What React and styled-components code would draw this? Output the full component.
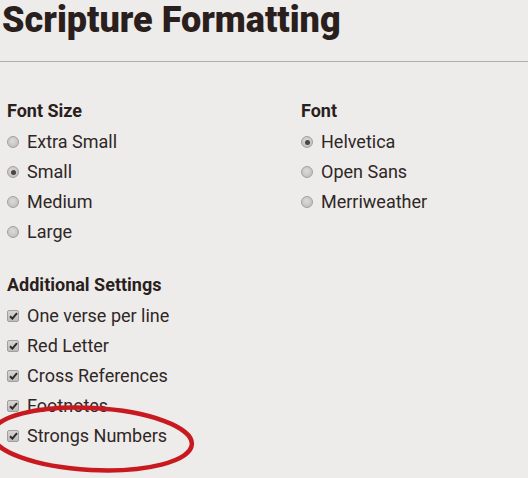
import React from "react";
import styled, { createGlobalStyle } from "styled-components";

const GlobalStyle = createGlobalStyle`
  html, body {
    margin: 0;
    padding: 0;
    background: #edecea;
  }
  body {
    font-family: Roboto, "Liberation Sans", sans-serif;
    color: #2b2322;
  }
`;

const Page = styled.div`
  position: relative;
  width: 528px;
  height: 478px;
  overflow: hidden;
`;

const Title = styled.h1`
  margin: 0;
  padding: 2px 0 0 2px;
  font-size: 36px;
  line-height: 36px;
  font-weight: 900;
  color: #2a1f1d;
`;

const Divider = styled.hr`
  margin: 23px 0 0;
  border: none;
  height: 1px;
  background: #b1afac;
`;

const Settings = styled.div`
  display: grid;
  grid-template-columns: 294px 1fr;
  padding: 33px 0 0 7px;
  row-gap: 22px;
`;

const Section = styled.section`
  display: flex;
  flex-direction: column;
  grid-column: ${(p) => (p.$wide ? "1 / -1" : "auto")};
`;

const Heading = styled.h3`
  margin: 0;
  font-size: 18px;
  line-height: 32px;
  font-weight: 700;
  color: #2a1f1d;
`;

const Option = styled.label`
  display: flex;
  align-items: center;
  height: 30px;
  font-size: 18px;
  line-height: 30px;
  color: #2f2726;
`;

const Radio = styled.span`
  position: relative;
  box-sizing: border-box;
  width: 12px;
  height: 12px;
  margin-right: 8px;
  border-radius: 50%;
  border: 1px solid #a3a19f;
  background: radial-gradient(circle at 45% 40%, #dcdbd9 0%, #c4c3c1 70%, #b3b2b0 100%);

  &::after {
    content: "";
    display: ${(p) => (p.$checked ? "block" : "none")};
    position: absolute;
    left: 50%;
    top: 50%;
    width: 5px;
    height: 5px;
    margin: -2.5px 0 0 -2.5px;
    border-radius: 50%;
    background: #4a4544;
  }
`;

const Box = styled.span`
  display: flex;
  align-items: center;
  justify-content: center;
  box-sizing: border-box;
  width: 12px;
  height: 12px;
  margin-right: 8px;
  border-radius: 2px;
  border: 1px solid #a19f9c;
  background: linear-gradient(#d6d5d3, #bdbcba);
`;

const Circle = styled.svg`
  position: absolute;
  left: 0;
  top: 0;
  pointer-events: none;
`;

function RadioOption({ label, checked }) {
  return (
    <Option>
      <Radio $checked={checked} />
      {label}
    </Option>
  );
}

function CheckOption({ label }) {
  return (
    <Option>
      <Box>
        <svg width="9" height="8" viewBox="0 0 9 8">
          <path d="M1 4.2 L3.4 6.6 L8 1.2" fill="none" stroke="#2e2a29" strokeWidth="2" />
        </svg>
      </Box>
      {label}
    </Option>
  );
}

const sizes = ["Extra Small", "Small", "Medium", "Large"];
const fonts = ["Helvetica", "Open Sans", "Merriweather"];
const extras = ["One verse per line", "Red Letter", "Cross References", "Footnotes", "Strongs Numbers"];

export default function App() {
  return (
    <Page>
      <GlobalStyle />
      <Title>Scripture Formatting</Title>
      <Divider />
      <Settings>
        <Section>
          <Heading>Font Size</Heading>
          {sizes.map((s) => (
            <RadioOption key={s} label={s} checked={s === "Small"} />
          ))}
        </Section>
        <Section>
          <Heading>Font</Heading>
          {fonts.map((f) => (
            <RadioOption key={f} label={f} checked={f === "Helvetica"} />
          ))}
        </Section>
        <Section $wide>
          <Heading>Additional Settings</Heading>
          {extras.map((e) => (
            <CheckOption key={e} label={e} />
          ))}
        </Section>
      </Settings>
      <Circle width="528" height="478" viewBox="0 0 528 478">
        <ellipse
          cx="92"
          cy="439"
          rx="100"
          ry="31"
          fill="none"
          stroke="#c8191f"
          strokeWidth="4.5"
          transform="rotate(3 92 439)"
        />
      </Circle>
    </Page>
  );
}
